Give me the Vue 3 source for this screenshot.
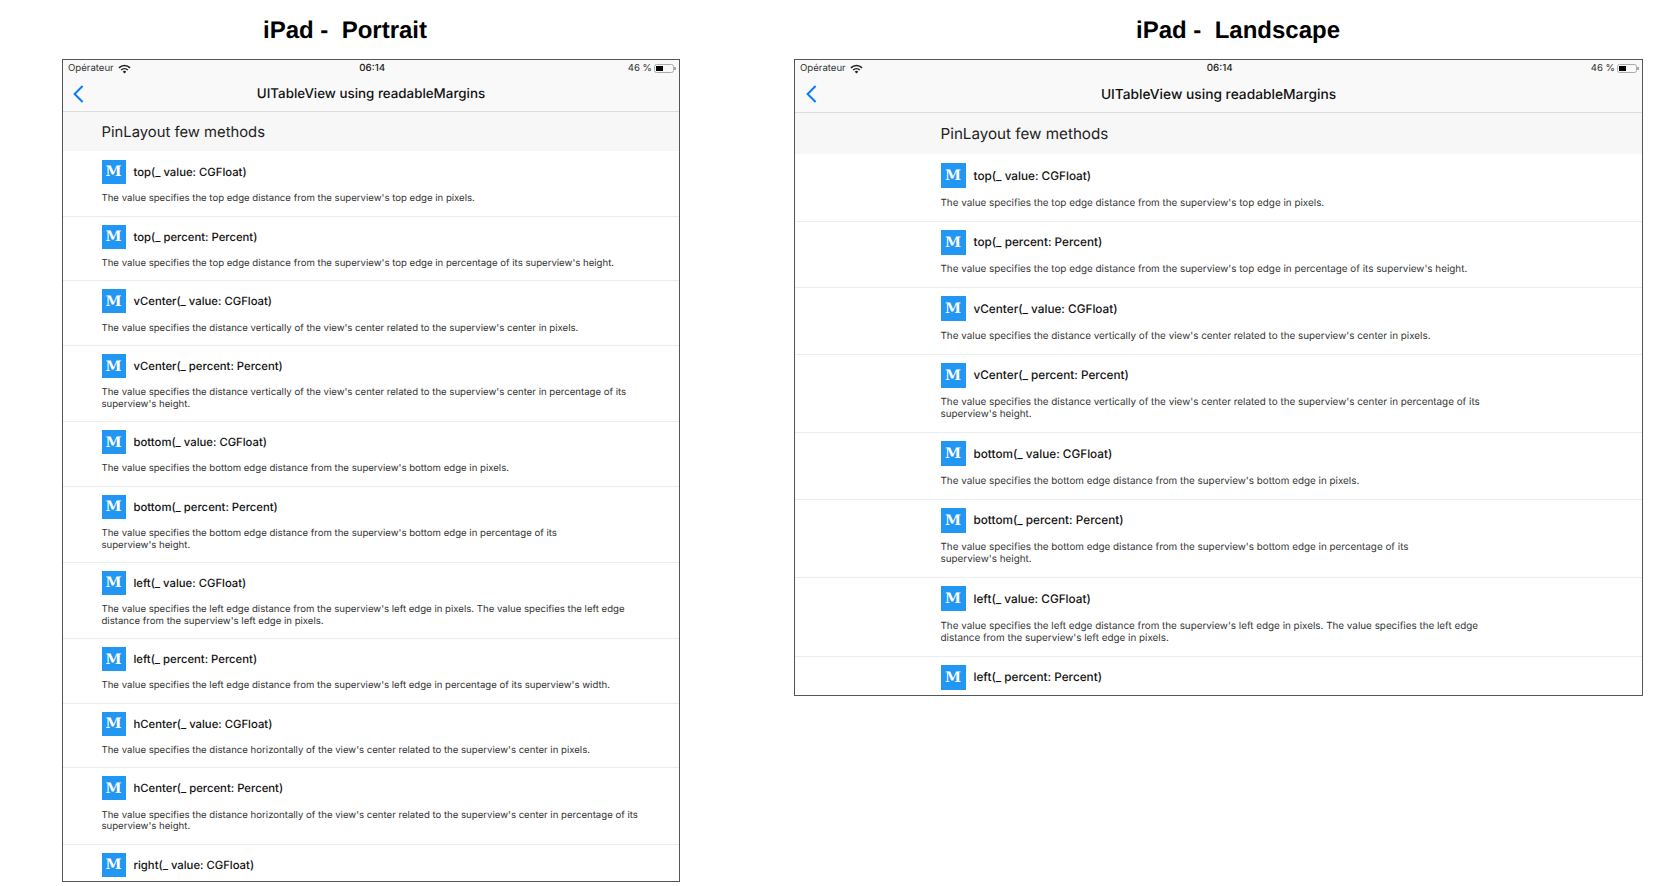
<template>
  <div class="page">
    <section v-for="d in devices" :key="d.name" class="device" :class="d.name">
      <h2 class="device-title">{{ d.title }}</h2>
      <div class="frame">
        <div class="status">
          <div class="carrier">
            <span>Opérateur</span>
            <svg class="wifi" viewBox="0 0 14 10">
              <path d="M.4 3.4a9.4 9.4 0 0 1 13.2 0l-1.2 1.2a7.7 7.7 0 0 0-10.8 0z" />
              <path d="M2.8 5.8a6 6 0 0 1 8.4 0L10 7a4.3 4.3 0 0 0-6 0z" />
              <path d="M5.1 8.1a2.7 2.7 0 0 1 3.8 0L7 10z" />
            </svg>
          </div>
          <span class="time">06:14</span>
          <div class="battery-wrap">
            <span>46 %</span>
            <span class="battery"><i class="level"></i></span>
          </div>
        </div>
        <div class="nav">
          <svg class="back" viewBox="0 0 11 18">
            <path d="M9.6 1 1.6 9l8 8" />
          </svg>
          <span class="nav-title">UITableView using readableMargins</span>
        </div>
        <div class="section-head">PinLayout few methods</div>
        <div v-for="(m, i) in methods.slice(0, d.rows)" :key="m.name" class="row">
          <div class="row-top">
            <span class="icon">M</span>
            <span class="method">{{ m.name }}</span>
          </div>
          <!-- the last visible row is cut by the frame, only its title shows -->
          <p v-if="i < d.rows - 1" class="desc">
            <span v-for="line in m.lines" :key="line">{{ line }}</span>
          </p>
        </div>
      </div>
    </section>
  </div>
</template>

<script setup>
const devices = [
  { name: 'portrait', title: 'iPad -  Portrait', rows: 11 },
  { name: 'landscape', title: 'iPad -  Landscape', rows: 8 },
];

const methods = [
  { name: 'top(_ value: CGFloat)', lines: ["The value specifies the top edge distance from the superview's top edge in pixels."] },
  { name: 'top(_ percent: Percent)', lines: ["The value specifies the top edge distance from the superview's top edge in percentage of its superview's height."] },
  { name: 'vCenter(_ value: CGFloat)', lines: ["The value specifies the distance vertically of the view's center related to the superview's center in pixels."] },
  { name: 'vCenter(_ percent: Percent)', lines: ["The value specifies the distance vertically of the view's center related to the superview's center in percentage of its", "superview's height."] },
  { name: 'bottom(_ value: CGFloat)', lines: ["The value specifies the bottom edge distance from the superview's bottom edge in pixels."] },
  { name: 'bottom(_ percent: Percent)', lines: ["The value specifies the bottom edge distance from the superview's bottom edge in percentage of its", "superview's height."] },
  { name: 'left(_ value: CGFloat)', lines: ["The value specifies the left edge distance from the superview's left edge in pixels. The value specifies the left edge", "distance from the superview's left edge in pixels."] },
  { name: 'left(_ percent: Percent)', lines: ["The value specifies the left edge distance from the superview's left edge in percentage of its superview's width."] },
  { name: 'hCenter(_ value: CGFloat)', lines: ["The value specifies the distance horizontally of the view's center related to the superview's center in pixels."] },
  { name: 'hCenter(_ percent: Percent)', lines: ["The value specifies the distance horizontally of the view's center related to the superview's center in percentage of its", "superview's height."] },
  { name: 'right(_ value: CGFloat)', lines: [] },
];
</script>

<style scoped>
.page {
  display: flex;
  align-items: flex-start;
  gap: 114px;
  padding-left: 62px;
  font-family: Inter, "Liberation Sans", sans-serif;
  color: #111;
  text-rendering: geometricPrecision;
}

.portrait {
  --w: 618px;
  --h: 823px;
  --title-pad: 201px;
  --nav-h: 34.5px;
  --nav-pad: 10px;
  --head-h: 39.4px;
  --head-pad: 1px;
  --head-size: 14.8px;
  --left: 38.5px;
  --icon: 24px;
  --icon-gap: 8px;
  --method-size: 11.3px;
  --desc-size: 9.6px;
  --desc-line: 11.4px;
  --desc-top: 9.3px;
  --row-bottom: 11px;
  --nav-size: 13.35px;
}

.landscape {
  --w: 849px;
  --h: 637px;
  --title-pad: 342px;
  --nav-h: 36px;
  --nav-pad: 10.5px;
  --head-h: 41px;
  --head-pad: 0px;
  --head-size: 15.2px;
  --left: 145.5px;
  --icon: 25px;
  --icon-gap: 8px;
  --method-size: 11.75px;
  --desc-size: 9.87px;
  --desc-line: 11.9px;
  --desc-top: 9.5px;
  --row-bottom: 11.2px;
  --nav-size: 13.75px;
}

.device-title {
  margin: 0;
  height: 59px;
  line-height: 61px;
  padding-left: var(--title-pad);
  font-family: "Liberation Sans", Arial, sans-serif;
  font-size: 24px;
  font-weight: 700;
  color: #000;
  white-space: pre;
}

.frame {
  box-sizing: border-box;
  width: var(--w);
  height: var(--h);
  border: 1.5px solid #555;
  overflow: hidden;
  background: #fff;
}

.status {
  display: grid;
  grid-template-columns: 1fr auto 1fr;
  align-items: center;
  height: 17.5px;
  margin-bottom: -0.5px;
  padding: 0 5.5px 0 5px;
  background: #f9f9f9;
  font-size: 9.6px;
  color: #333;
}

.carrier {
  display: flex;
  align-items: center;
  gap: 4.5px;
}

.wifi {
  width: 13px;
  height: 9.5px;
  fill: #222;
}

.time {
  padding-left: 3px;
  font-size: 9.8px;
  font-weight: 500;
  color: #222;
}

.battery-wrap {
  display: flex;
  justify-content: flex-end;
  align-items: center;
  gap: 1.5px;
}

.battery {
  position: relative;
  box-sizing: border-box;
  width: 20px;
  height: 9px;
  padding: 1px;
  border: 1px solid #aaa;
  border-radius: 2.5px;
}

.battery::after {
  content: "";
  position: absolute;
  right: -3px;
  top: 2px;
  width: 1.5px;
  height: 3px;
  background: #aaa;
}

.level {
  display: block;
  width: 46%;
  height: 100%;
  background: #000;
}

.nav {
  position: relative;
  display: flex;
  align-items: center;
  justify-content: center;
  box-sizing: border-box;
  height: var(--nav-h);
  background: #f9f9f9;
  border-bottom: 1px solid #dcdcdc;
}

.back {
  position: absolute;
  left: var(--nav-pad);
  top: 8px;
  width: 11px;
  height: 18px;
  fill: none;
  stroke: #0a7aff;
  stroke-width: 2;
}

.nav-title {
  font-size: var(--nav-size);
  font-weight: 500;
  color: #111;
}

.section-head {
  display: flex;
  align-items: center;
  box-sizing: border-box;
  height: var(--head-h);
  padding: var(--head-pad) 0 0 var(--left);
  background: #f7f7f7;
  font-size: var(--head-size);
  color: #222;
}

.row {
  padding: 9px 0 var(--row-bottom) var(--left);
  border-bottom: 1px solid #ececec;
  margin-bottom: -1px;
}

.row-top {
  display: flex;
  align-items: center;
  gap: var(--icon-gap);
}

.icon {
  display: flex;
  align-items: center;
  justify-content: center;
  width: var(--icon);
  height: var(--icon);
  background: #2196f3;
  color: #fff;
  font-family: "DejaVu Serif", "Liberation Serif", serif;
  font-size: 14.5px;
  font-weight: 700;
}

.method {
  font-size: var(--method-size);
  font-weight: 500;
  color: #111;
}

.desc {
  margin: var(--desc-top) 0 0;
  font-size: var(--desc-size);
  line-height: var(--desc-line);
  color: #333;
  white-space: nowrap;
}

.desc span {
  display: block;
}
</style>
